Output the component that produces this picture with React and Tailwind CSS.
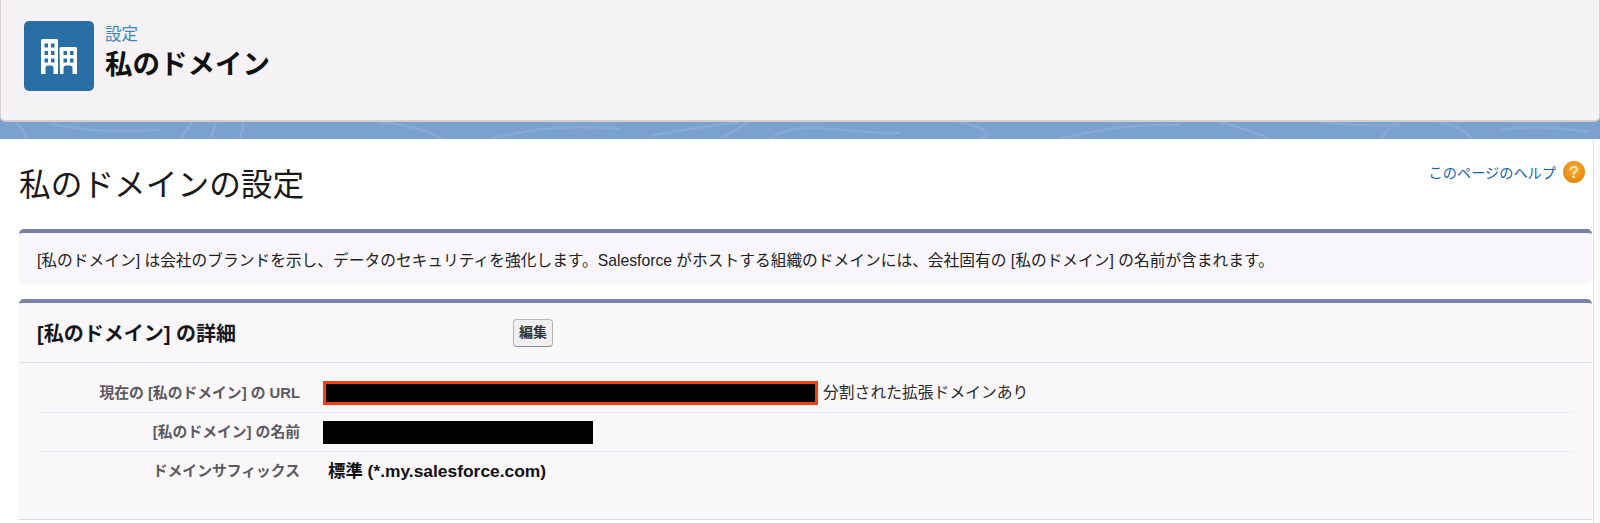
const jp = "font-['Liberation_Sans','Noto_Sans_CJK_JP',sans-serif]"

function BuildingIcon() {
  return (
    <svg viewBox="0 0 36 35" className="h-[35px] w-[36px]">
      <path fill="white" d="M0 1.5Q0 0 1.5 0h14Q17 0 17 1.5V35h-4.5v-6q0-2.5-2.5-2.5H7q-2.5 0-2.5 2.5v6H0z" />
      <path fill="white" d="M18.5 9.5Q18.5 8 20 8h14.500Q36 8 36 9.500V35h-4.500v-6q0-2.500-2.500-2.500h-4q-2.500 0-2.500 2.500v6h-3.500z" />
      <g fill="#2a6ea6">
        <rect x="3.500" y="4.500" width="3.500" height="4" />
        <rect x="10" y="4.500" width="3.500" height="4" />
        <rect x="3.500" y="12" width="3.500" height="4" />
        <rect x="10" y="12" width="3.500" height="4" />
        <rect x="3.500" y="19.500" width="3.500" height="4" />
        <rect x="10" y="19.500" width="3.500" height="4" />
        <rect x="22.500" y="12" width="3.500" height="4" />
        <rect x="29" y="12" width="3.500" height="4" />
        <rect x="22.500" y="19.500" width="3.500" height="4" />
        <rect x="29" y="19.500" width="3.500" height="4" />
      </g>
    </svg>
  )
}

function HelpIcon() {
  return (
    <div className="flex h-[22px] w-[22px] items-center justify-center rounded-full bg-[radial-gradient(circle_at_50%_40%,#f8ab35,#e88d12_65%,#bd7410)] text-[17px] font-bold leading-none text-[#fce3b4]">
      ?
    </div>
  )
}

// うっすらした背景の模様
function BandPattern() {
  return (
    <svg viewBox="0 0 1600 17" preserveAspectRatio="none" className="block h-full w-full" fill="none" stroke="#a4bfe0" strokeWidth="2.500" strokeOpacity="0.3">
      <path d="M15 0q10 8 12 17M50 2q50 10 110 6M180 17q8-10 12-17M210 17q4-9 6-17M240 17q2-8 4-17" />
      <path d="M380 0q40 4 62 17M490 17q60-16 130-10M650 14q40-8 90-14M720 17q20-10 26-17M770 17q20-14 60-10q40 4 70 4" />
      <path d="M960 0q40 10 20 17M1060 17q60-16 120-14M1220 0q30 8 50 17M1320 0q40 5 80 3M1380 17q10-10 16-17M1440 0q30 8 30 17M1500 8q40-6 90 2" />
    </svg>
  )
}

function Row({ label, children, border }) {
  return (
    <div className={`flex h-[39px] items-center ${border ? 'border-b border-[#ecebef]' : ''}`}>
      <div className="w-[263px] text-right text-[14.800px] font-bold text-[#5a5a60]">{label}</div>
      <div className="ml-[23px] flex items-center">{children}</div>
    </div>
  )
}

export default function App() {
  return (
    <div className={`${jp} h-[523px] w-[1600px] overflow-hidden bg-[#fbfafc] text-[#16161a]`}>
      <div className="bg-[linear-gradient(#6c95c6,#7ba2cf_35%)]">
        <header className="flex h-[122px] items-start rounded-b-[5px] border-x border-b-2 border-[#d2cfce] bg-[#f4f2f5] pl-[23px] pt-[21px]">
          <div className="flex h-[70px] w-[70px] items-center justify-center rounded-[5px] bg-[#2a6ea6]">
            <BuildingIcon />
          </div>
          <div className="ml-[11px]">
            <div className="mt-[3px] text-[16.500px] leading-[20px] text-[#3f86bd]">設定</div>
            <div className="mt-[3px] text-[27.500px] font-bold leading-[36px] text-[#111]">私のドメイン</div>
          </div>
        </header>
        <div className="h-[17px]">
          <BandPattern />
        </div>
      </div>
      <main className="ml-px mr-[6px] h-[384px] rounded-t-[5px] border-r border-[#e4e3e6] bg-white pl-[18px] pr-px">
        <div className="flex h-[90px] items-start justify-between">
          <h1 className="mt-[26px] text-[31.700px] font-normal leading-[40px] text-[#1a1a1a]">私のドメインの設定</h1>
          <div className="mr-[7px] mt-[21px] flex items-center gap-[7px]">
            <span className="pt-[3px] text-[14.200px] text-[#1464ae]">このページのヘルプ</span>
            <HelpIcon />
          </div>
        </div>
        <section className="flex h-[55px] items-center rounded-[5px] border-t-4 border-[#7a7ea6] bg-[#f8f6fa] pl-[18px] pt-[5px] text-[15.730px] text-[#222]">
          [私のドメイン] は会社のブランドを示し、データのセキュリティを強化します。Salesforce がホストする組織のドメインには、会社固有の [私のドメイン] の名前が含まれます。
        </section>
        <section className="mt-[15px] rounded-t-[5px] border-t-4 border-[#7a83a6] bg-[#f9f7fa]">
          <div className="flex h-[60px] items-center border-b border-[#dcdbe0] pl-[18px]">
            <h2 className="w-[476px] pt-[2px] text-[20px] font-bold text-[#16161a]">[私のドメイン] の詳細</h2>
            <button className="h-[28px] w-[40px] rounded-[4px] border border-[#b5b5b5] border-b-[#8c8c8c] bg-[#f0f0f0] text-[14px] font-bold text-[#333]">編集</button>
          </div>
          <div className="px-[18px] pt-[11px]">
            <Row label="現在の [私のドメイン] の URL" border>
              <div className="h-[24px] w-[495px] border-[3px] border-[#f8400f] bg-black" />
              <span className="ml-[5px] text-[15.800px] text-[#2a2a2a]">分割された拡張ドメインあり</span>
            </Row>
            <Row label="[私のドメイン] の名前" border>
              <div className="h-[23px] w-[270px] bg-black" />
            </Row>
            <Row label="ドメインサフィックス">
              <span className="ml-[5px] text-[17.400px] font-bold text-[#111]">標準 (*.my.salesforce.com)</span>
            </Row>
          </div>
          <div className="mt-[28px] border-b border-[#dcdbe0]" />
        </section>
      </main>
    </div>
  )
}
